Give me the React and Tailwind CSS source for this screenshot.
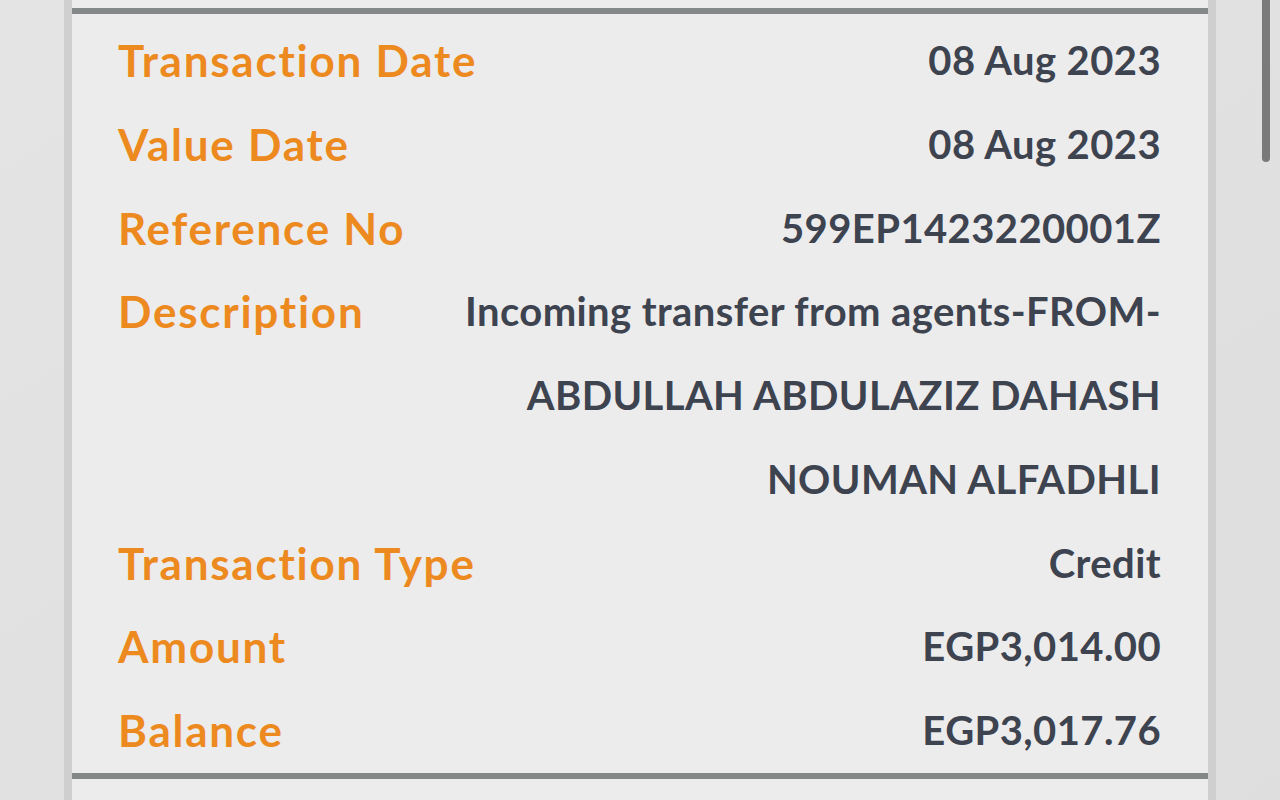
import React from "react";

const rows = [
  { label: "Transaction Date", value: ["08 Aug 2023"] },
  { label: "Value Date", value: ["08 Aug 2023"] },
  { label: "Reference No", value: ["599EP1423220001Z"] },
  {
    label: "Description",
    value: ["Incoming transfer from agents-FROM-", "ABDULLAH ABDULAZIZ DAHASH", "NOUMAN ALFADHLI"],
  },
  { label: "Transaction Type", value: ["Credit"] },
  { label: "Amount", value: ["EGP3,014.00"] },
  { label: "Balance", value: ["EGP3,017.76"] },
];

const App = () => {
  return (
    <div className="flex w-full h-[800px] overflow-hidden bg-gradient-to-br from-[#e4e4e4] to-[#dedede] font-['Lato',sans-serif] [font-variant-ligatures:none]">
      <div className="w-[64px] shrink-0" />
      <div className="w-[1152px] shrink-0 border-x-[8px] border-x-[#cfcfcf] bg-[#ececec] pt-[8px]">
        <div className="h-[6px] bg-[#858888]" />
        <div className="pl-[46px] pr-[47px] pt-[5px]">
          {rows.map((row) => (
            <div key={row.label} className="flex justify-between items-start leading-[83.75px]">
              <div className="text-[#ec8a1f] text-[44px] tracking-[0.04em] font-bold whitespace-nowrap">{row.label}</div>
              <div className="text-right text-[#3e4350] text-[40px] tracking-[0.01em] font-bold">
                {row.value.map((line) => (
                  <div key={line} className="whitespace-nowrap">{line}</div>
                ))}
              </div>
            </div>
          ))}
        </div>
        <div className="h-[6px] bg-[#858888]" />
      </div>
      <div className="relative flex-1">
        <div className="absolute left-[46px] top-0 w-[8px] h-[162px] rounded-b-full bg-[#7a7a7a]" />
      </div>
    </div>
  );
};

export default App;
